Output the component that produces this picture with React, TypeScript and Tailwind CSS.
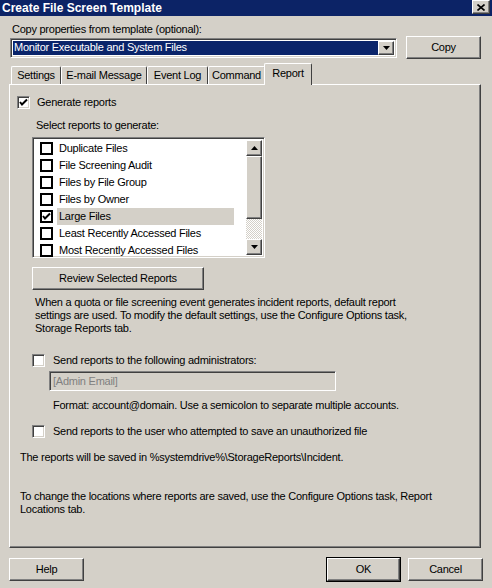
import React from 'react';

const raised =
  'border border-t-white border-l-white border-r-[#404040] border-b-[#404040] shadow-[inset_-1px_-1px_#808080]';
const sunken =
  'border border-t-[#808080] border-l-[#808080] border-r-white border-b-white shadow-[inset_1px_1px_#404040,inset_-1px_-1px_#d4d0c8]';

const Check = () => (
  <svg width="9" height="9" viewBox="0 0 9 9" className="block">
    <path d="M1 4 L3 6.5 L8 1.5" stroke="#000" strokeWidth="2" fill="none" />
  </svg>
);

const Checkbox3D = ({ checked }: { checked?: boolean }) => (
  <div className={`w-[13px] h-[13px] bg-white flex items-center justify-center shrink-0 ${sunken}`}>
    {checked && <Check />}
  </div>
);

const FlatBox = ({ checked }: { checked?: boolean }) => (
  <div className="w-[13px] h-[13px] border-2 border-black bg-white flex items-center justify-center shrink-0">
    {checked && <Check />}
  </div>
);

const Button = ({ label, className = '' }: { label: string; className?: string }) => (
  <div className={`h-[23px] bg-[#d4d0c8] flex items-center justify-center ${raised} ${className}`}>
    {label}
  </div>
);

const Arrow = ({ up }: { up?: boolean }) => (
  <svg width="7" height="4" viewBox="0 0 7 4">
    <path d={up ? 'M0 4 L3.5 0 L7 4 Z' : 'M0 0 L7 0 L3.5 4 Z'} fill="#000" />
  </svg>
);

const reports = [
  'Duplicate Files',
  'File Screening Audit',
  'Files by File Group',
  'Files by Owner',
  'Large Files',
  'Least Recently Accessed Files',
  'Most Recently Accessed Files',
];

const tabs = [
  { label: 'Settings', w: 'w-[50px]' },
  { label: 'E-mail Message', w: 'w-[86px]' },
  { label: 'Event Log', w: 'w-[61px]' },
  { label: 'Command', w: 'w-[57px]' },
];

export default function App() {
  return (
    <div
      className="w-[492px] h-[588px] bg-[#d4d0c8] flex flex-col text-[11px] leading-[13px] tracking-[-0.25px] text-black overflow-hidden"
      style={{ fontFamily: '"Liberation Sans", Arial, sans-serif' }}
    >
      {/* title bar */}
      <div className="h-[16px] shrink-0 bg-[#0c2366] flex items-center justify-between px-[2px]">
        <span className="text-white font-bold text-[12px] tracking-normal">Create File Screen Template</span>
        <div className={`w-[18px] h-[14px] -mt-[2px] flex items-center justify-center bg-[#d4d0c8] ${raised}`}>
          <svg width="8" height="7" viewBox="0 0 8 7">
            <path d="M0.5 0.5 L7.5 6.5 M7.5 0.5 L0.5 6.5" stroke="#000" strokeWidth="1.6" />
          </svg>
        </div>
      </div>

      {/* template picker */}
      <div className="pl-[12px] mt-[7px] h-[13px]">Copy properties from template (optional):</div>
      <div className="flex items-center pl-[10px] mt-[0px] h-[23px]">
        <div className={`w-[387px] h-[20px] bg-white flex items-center p-[2px] ${sunken}`}>
          <div className="flex-1 h-full bg-[#0a246a] text-white flex items-center pl-[1px]">
            Monitor Executable and System Files
          </div>
          <div className={`w-[16px] h-full flex items-center justify-center bg-[#d4d0c8] ${raised}`}>
            <Arrow />
          </div>
        </div>
        <Button label="Copy" className="w-[75px] ml-[9px]" />
      </div>

      {/* tabs */}
      <div className="flex items-end pl-[11px] mt-[4px] h-[21px]">
        {tabs.map((t) => (
          <div
            key={t.label}
            className={`${t.w} h-[18px] shrink-0 flex items-center justify-center border-t border-l border-t-white border-l-white border-r border-r-[#404040] rounded-t-[2px]`}
          >
            {t.label}
          </div>
        ))}
        <div className="w-[48px] h-[22px] shrink-0 pb-[3px] flex items-center justify-center border-t border-l border-t-white border-l-white border-r border-r-[#404040] rounded-t-[2px] -ml-[1px] relative z-10 bg-[#d4d0c8] -mb-[1px]">
          Report
        </div>
      </div>

      {/* panel */}
      <div className="mx-[9px] w-[472px] h-[464px] shrink-0 border border-t-white border-l-white border-r-[#404040] border-b-[#404040] shadow-[inset_-1px_-1px_#808080] flex flex-col pl-[7px] pt-[11px]">
        <div className="flex items-center gap-[7px] h-[13px]">
          <Checkbox3D checked />
          <span>Generate reports</span>
        </div>
        <div className="ml-[19px] mt-[10px] h-[13px]">Select reports to generate:</div>

        <div className={`ml-[15px] mt-[5px] w-[233px] h-[121px] bg-white flex p-[2px] ${sunken}`}>
          <div className="flex-1 flex flex-col pl-[5px]">
            {reports.map((r, i) => (
              <div key={r} className="h-[17px] flex items-center shrink-0">
                <FlatBox checked={i === 4} />
                <span
                  className={`ml-[4px] h-[17px] flex items-center pl-[2px] whitespace-nowrap ${
                    i === 4 ? 'bg-[#d4d0c8] w-[177px]' : ''
                  }`}
                >
                  {r}
                </span>
              </div>
            ))}
          </div>
          <div className="w-[16px] flex flex-col">
            <div className={`h-[16px] flex items-center justify-center bg-[#d4d0c8] ${raised}`}>
              <Arrow up />
            </div>
            <div className={`h-[63px] bg-[#d4d0c8] ${raised}`} />
            <div
              className="flex-1"
              style={{
                backgroundImage: 'repeating-conic-gradient(#d4d0c8 0% 25%, #ffffff 0% 50%)',
                backgroundSize: '2px 2px',
              }}
            />
            <div className={`h-[16px] flex items-center justify-center bg-[#d4d0c8] ${raised}`}>
              <Arrow />
            </div>
          </div>
        </div>

        <Button label="Review Selected Reports" className="ml-[15px] mt-[9px] w-[172px]" />

        <p className="ml-[18px] mt-[6px] whitespace-nowrap">
          When a quota or file screening event generates incident reports, default report
          <br />
          settings are used. To modify the default settings, use the Configure Options task,
          <br />
          Storage Reports tab.
        </p>

        <div className="flex items-center ml-[15px] mt-[19px] gap-[8px] h-[13px]">
          <Checkbox3D />
          <span>Send reports to the following administrators:</span>
        </div>
        <div className={`ml-[32px] mt-[4px] w-[287px] h-[20px] bg-[#d4d0c8] flex items-center pl-[3px] text-[#808080] ${sunken}`}>
          [Admin Email]
        </div>
        <div className="ml-[36px] mt-[8px] h-[13px]">
          Format: account@domain. Use a semicolon to separate multiple accounts.
        </div>

        <div className="flex items-center ml-[15px] mt-[13px] gap-[8px] h-[13px]">
          <Checkbox3D />
          <span>Send reports to the user who attempted to save an unauthorized file</span>
        </div>

        <div className="ml-[3px] mt-[13px] h-[13px]">
          The reports will be saved in %systemdrive%\StorageReports\Incident.
        </div>
        <p className="ml-[3px] mt-[26px] whitespace-nowrap">
          To change the locations where reports are saved, use the Configure Options task, Report
          <br />
          Locations tab.
        </p>
      </div>

      {/* footer */}
      <div className="flex items-center px-[9px] mt-[9px]">
        <Button label="Help" className="w-[75px]" />
        <div className="flex-1" />
        <div className="border border-black">
          <Button label="OK" className="w-[73px] h-[21px]" />
        </div>
        <Button label="Cancel" className="w-[75px] ml-[7px]" />
      </div>
    </div>
  );
}
